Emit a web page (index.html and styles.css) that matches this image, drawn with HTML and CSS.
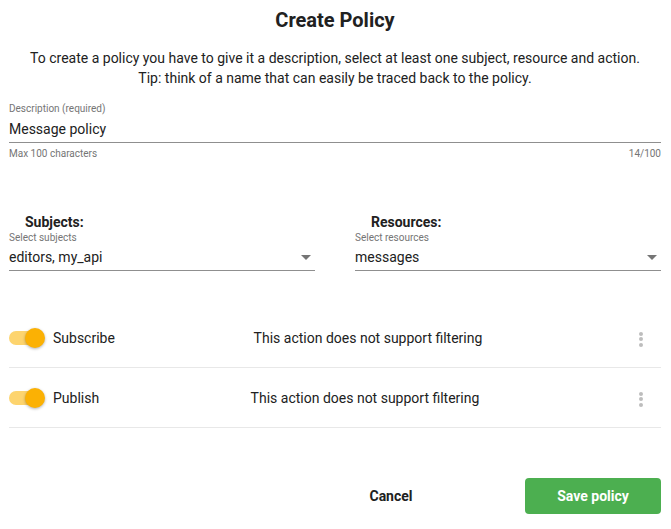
FILE: index.html
```html
<!DOCTYPE html>
<html>
<head>
<meta charset="utf-8">
<link rel="stylesheet" href="styles.css">
</head>
<body>
<div class="dialog">
  <h1 class="title">Create Policy</h1>
  <p class="intro">To create a policy you have to give it a description, select at least one subject, resource and action.<br>Tip: think of a name that can easily be traced back to the policy.</p>

  <div class="field">
    <label class="field-label">Description (required)</label>
    <div class="field-input">Message policy</div>
    <div class="helper"><span>Max 100 characters</span><span>14/100</span></div>
  </div>

  <div class="selects">
    <div class="select-col">
      <div class="select-title">Subjects:</div>
      <div class="field-label">Select subjects</div>
      <div class="select-input"><span>editors, my_api</span><span class="arrow"></span></div>
    </div>
    <div class="select-col">
      <div class="select-title">Resources:</div>
      <div class="field-label">Select resources</div>
      <div class="select-input"><span>messages</span><span class="arrow"></span></div>
    </div>
  </div>

  <div class="actions">
    <div class="action-row">
      <span class="switch"><span class="track"></span><span class="thumb"></span></span>
      <span class="action-name">Subscribe</span>
      <span class="action-note">This action does not support filtering</span>
      <span class="kebab"><i></i><i></i><i></i></span>
    </div>
    <div class="action-row">
      <span class="switch"><span class="track"></span><span class="thumb"></span></span>
      <span class="action-name">Publish</span>
      <span class="action-note note-shift">This action does not support filtering</span>
      <span class="kebab"><i></i><i></i><i></i></span>
    </div>
  </div>

  <div class="buttons">
    <button class="btn btn-text">Cancel</button>
    <button class="btn btn-save">Save policy</button>
  </div>
</div>
</body>
</html>
```

FILE: styles.css
```css
* { box-sizing: border-box; }
html, body { margin: 0; padding: 0; background: #fff; }
body { font-family: Roboto, "Noto Sans", Arial, sans-serif; color: #212121; }

.dialog { padding: 0 10px 0 9px; width: 671px; }

.title {
  margin: 0;
  padding-top: 8px;
  height: 40px;
  line-height: 24px;
  font-size: 20px;
  font-weight: 700;
  text-align: center;
  color: #212121;
}

.intro {
  margin: 8px 0 0;
  font-size: 14px;
  line-height: 20px;
  text-align: center;
  color: #212121;
}

.field { margin-top: 15px; }
.field-label {
  display: block;
  font-size: 10px;
  line-height: 12px;
  color: #757575;
}
.field-input {
  font-size: 14px;
  line-height: 20px;
  padding: 4px 0 3px;
  border-bottom: 1px solid #8f8f8f;
  color: #212121;
}
.helper {
  display: flex;
  justify-content: space-between;
  font-size: 10px;
  line-height: 12px;
  margin-top: 5px;
  color: #757575;
}

.selects {
  display: grid;
  grid-template-columns: 1fr 1fr;
  column-gap: 40px;
  margin-top: 54px;
}
.select-title {
  font-size: 14px;
  font-weight: 700;
  line-height: 16px;
  padding-left: 16px;
  margin-bottom: 2px;
}
.select-input {
  display: flex;
  align-items: center;
  justify-content: space-between;
  font-size: 14px;
  line-height: 20px;
  padding: 3px 4px 3px 0;
  border-bottom: 1px solid #8f8f8f;
}
.arrow {
  width: 0; height: 0;
  border-left: 5px solid transparent;
  border-right: 5px solid transparent;
  border-top: 5px solid #757575;
}

.actions { margin-top: 37px; }
.action-row {
  display: flex;
  align-items: center;
  height: 60px;
  border-bottom: 1px solid #e8e8e8;
}
.switch {
  position: relative;
  width: 36px;
  height: 20px;
  flex: none;
  margin-right: 8px;
}
.track {
  position: absolute;
  left: 0; top: 3px;
  width: 34px; height: 14px;
  border-radius: 7px;
  background: #fdd46e;
}
.thumb {
  position: absolute;
  left: 16px; top: 0;
  width: 20px; height: 20px;
  border-radius: 50%;
  background: #fbb104;
  box-shadow: 0 1px 3px rgba(0,0,0,0.3);
}
.action-name {
  font-size: 14px;
  color: #212121;
  width: 150px;
  flex: none;
}
.action-note {
  flex: 1;
  text-align: center;
  font-size: 14px;
  color: #212121;
  padding-right: 88px;
}
.note-shift { padding-right: 94px; }
.kebab {
  flex: none;
  width: 40px;
  display: flex;
  flex-direction: column;
  align-items: center;
  gap: 1.5px;
  padding-top: 3px;
}
.kebab i {
  width: 4px; height: 4px;
  border-radius: 50%;
  background: #bdbdbd;
}

.buttons {
  display: flex;
  justify-content: flex-end;
  align-items: center;
  gap: 66px;
  margin-top: 50px;
}
.btn {
  font-family: inherit;
  font-size: 14px;
  font-weight: 700;
  height: 36px;
  width: 136px;
  border: none;
  border-radius: 4px;
  cursor: pointer;
}
.btn-text { background: transparent; color: #212121; }
.btn-save { background: #4caf50; color: #fff; }
```
